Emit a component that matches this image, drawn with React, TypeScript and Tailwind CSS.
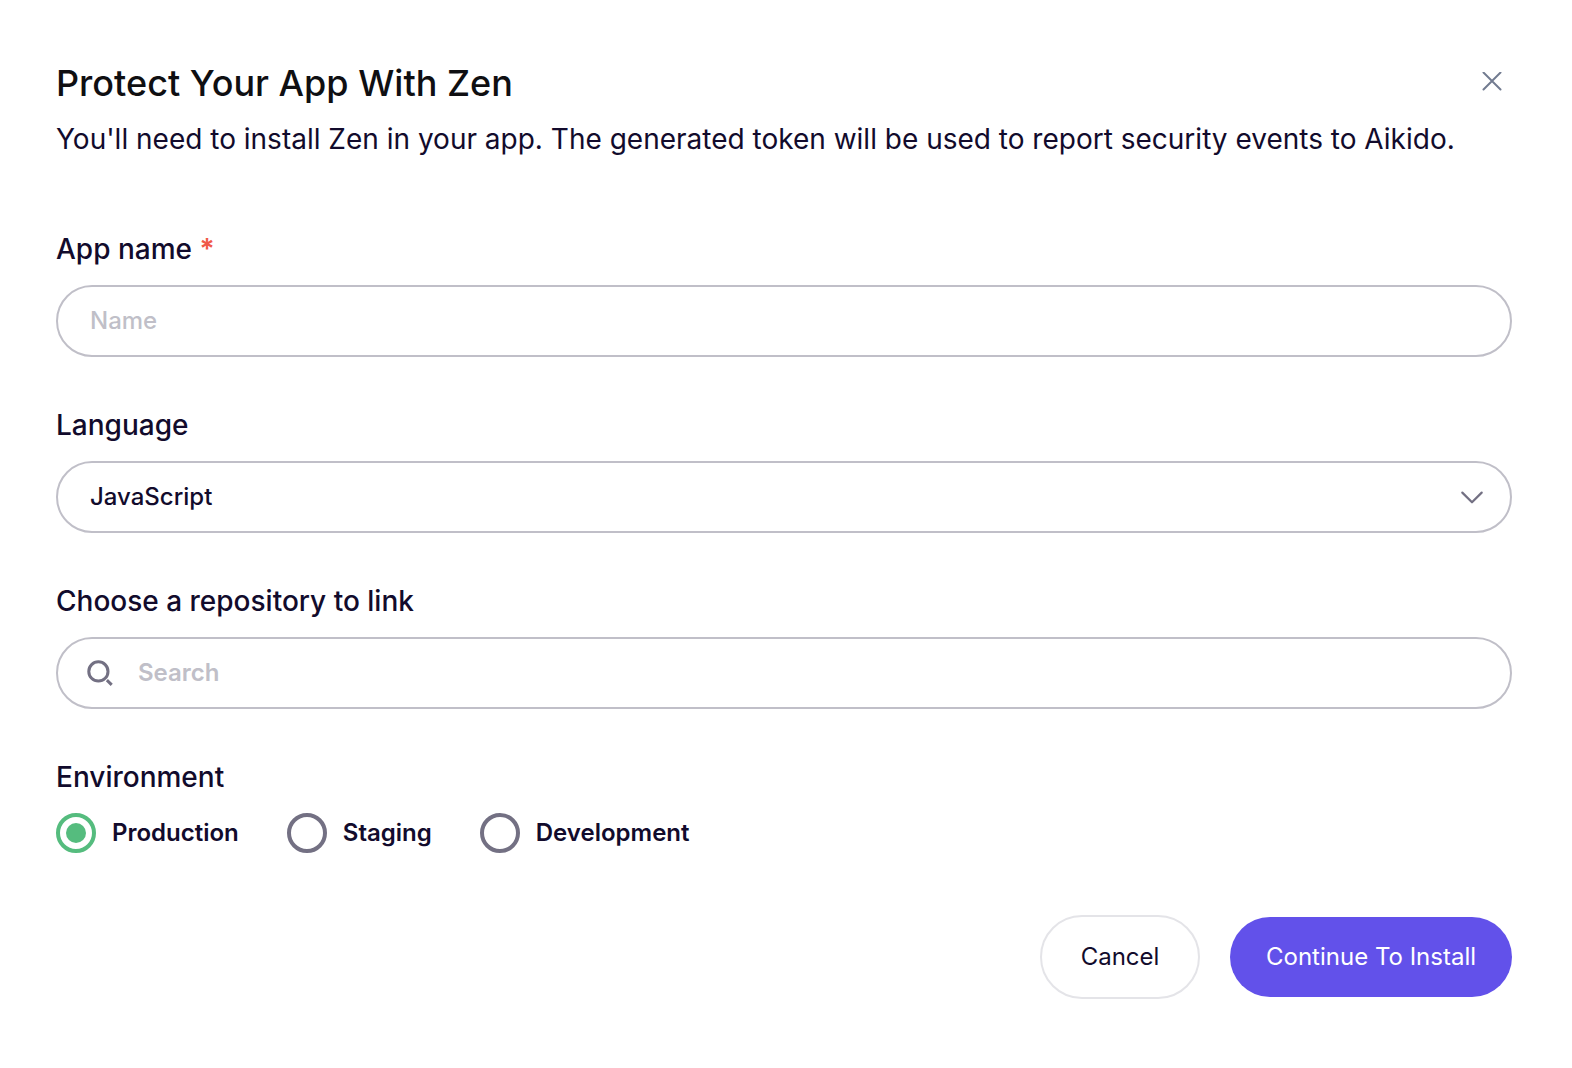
import React from "react";

const field =
  "h-[72px] w-full rounded-full border-2 border-[#c0bfc8] bg-white text-2xl font-medium text-[#120b2c] outline-none placeholder:text-[#c0bfc8]";
const label = "block text-[28px] leading-9 font-medium";

function Environment({ name, checked }: { name: string; checked?: boolean }) {
  return (
    <label className="flex items-center gap-4 text-2xl leading-10 font-semibold">
      <input
        type="radio"
        name="environment"
        defaultChecked={checked}
        className="grid size-10 appearance-none place-content-center rounded-full border-4 border-[#737083] before:size-5 before:rounded-full checked:border-[#55bc7e] checked:before:bg-[#55bc7e]"
      />
      {name}
    </label>
  );
}

export default function App() {
  return (
    <main className="min-h-screen bg-white pt-[62px] pr-[60px] pl-14 font-['Inter',sans-serif] text-[#120b2c]">
      <header className="flex items-start justify-between">
        <div>
          <h1 className="text-4xl leading-[42px] font-medium text-[#0f0f12]">Protect Your App With Zen</h1>
          <p className="mt-[15px] text-[28px] leading-10">
            You'll need to install Zen in your app. The generated token will be used to report security events to Aikido.
          </p>
        </div>
        <button type="button" aria-label="Close" className="-ml-10 grid size-10 shrink-0 place-items-center text-[#727b90]">
          <svg width="20" height="20" viewBox="0 0 20 20" fill="none" stroke="currentColor" strokeWidth="2" strokeLinecap="round">
            <path d="M1.5 0.5l17 17M18.5 0.5l-17 17" />
          </svg>
        </button>
      </header>
      <form className="mt-[72px]" onSubmit={(e) => e.preventDefault()}>
        <div>
          <label htmlFor="app-name" className={label}>
            App name <span className="font-semibold text-[#f05a48]">*</span>
          </label>
          <input id="app-name" placeholder="Name" className={`${field} mt-[18px] px-8 pb-0.5`} />
        </div>
        <div className="mt-[50px]">
          <label htmlFor="language" className={label}>Language</label>
          <div className="relative mt-[18px]">
            <select id="language" className={`${field} appearance-none px-8`}>
              <option>JavaScript</option>
            </select>
            <svg className="pointer-events-none absolute top-6 right-7 text-[#737083]" width="24" height="24" viewBox="0 0 24 24" fill="none" stroke="currentColor" strokeWidth="2.2" strokeLinecap="round" strokeLinejoin="round">
              <path d="M2.3 7.6l9.7 9.7 9.7-9.7" />
            </svg>
          </div>
        </div>
        <div className="mt-[50px]">
          <label htmlFor="repository" className={label}>Choose a repository to link</label>
          <div className="relative mt-[18px]">
            <svg className="pointer-events-none absolute top-[22px] left-[30px] text-[#737083]" width="28" height="28" viewBox="0 0 28 28" fill="none" stroke="currentColor" strokeWidth="3">
              <circle cx="12.4" cy="12.4" r="9.6" />
              <path d="M20.9 21.2l4.8 4.6" />
            </svg>
            <input id="repository" placeholder="Search" className={`${field} pr-8 pb-0.5 pl-20 placeholder:font-semibold`} />
          </div>
        </div>
        <fieldset className="mt-[50px]">
          <legend className={label}>Environment</legend>
          <div className="mt-[18px] flex gap-12">
            <Environment name="Production" checked />
            <Environment name="Staging" />
            <Environment name="Development" />
          </div>
        </fieldset>
        <div className="mt-[62px] flex items-center justify-end gap-[30px]">
          <button type="button" className="h-[84px] min-w-40 rounded-full border-2 border-[#e4e4e8] px-9 text-2xl">Cancel</button>
          <button type="submit" className="h-20 rounded-full bg-[#6251ea] px-9 text-2xl text-white">Continue To Install</button>
        </div>
      </form>
    </main>
  );
}
